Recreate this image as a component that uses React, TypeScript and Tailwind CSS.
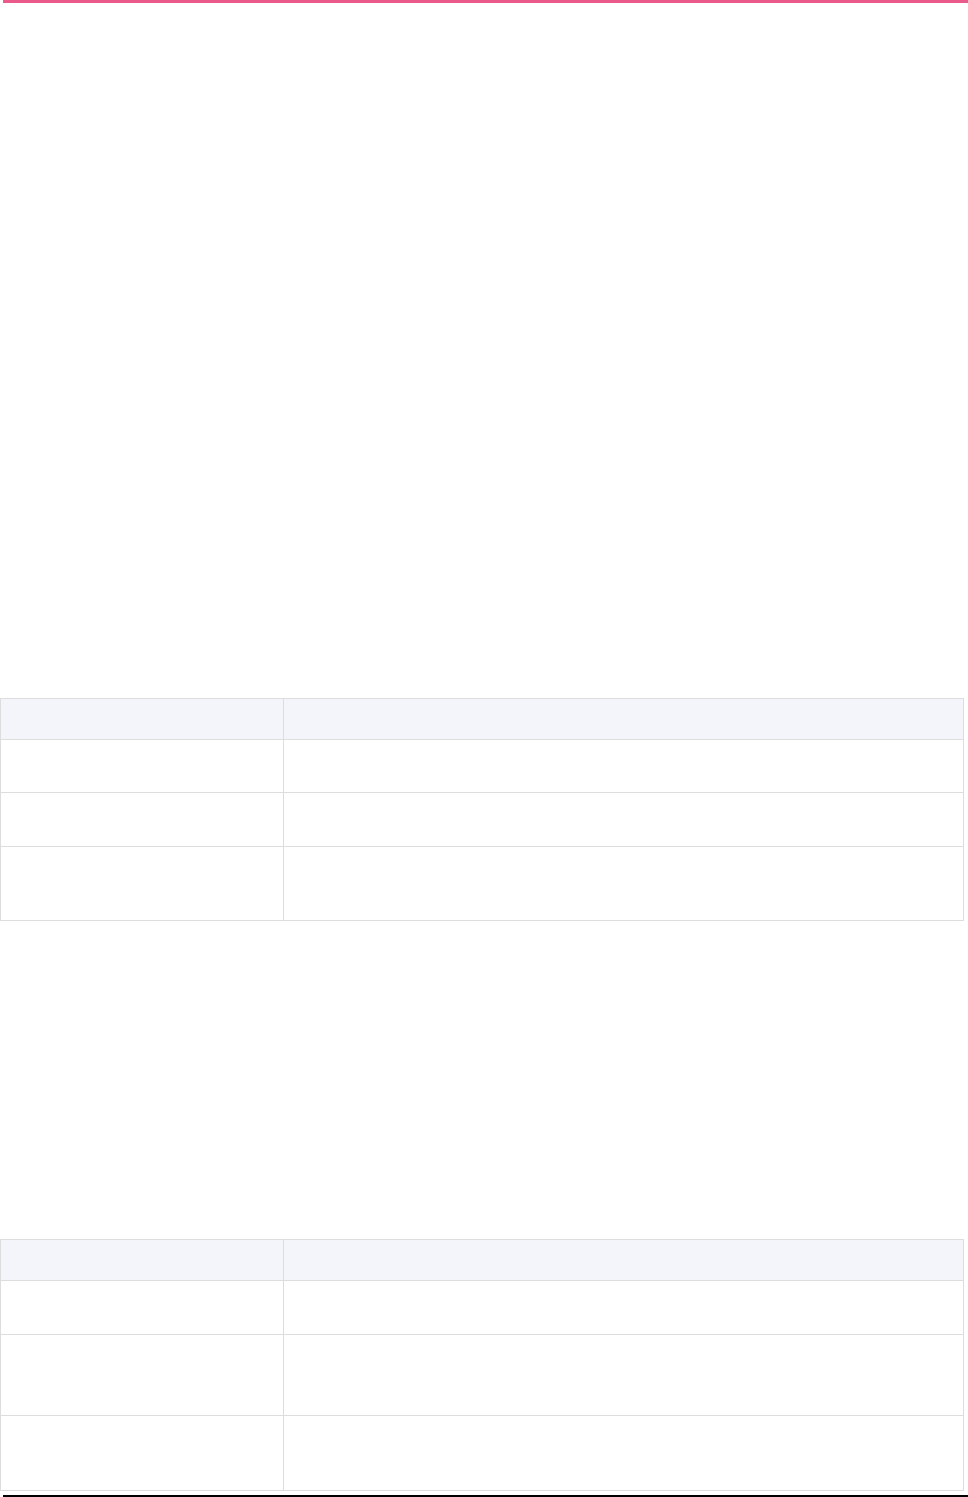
// Blank document page: accent bar on top, two empty bordered tables
const Table = ({ rows }: { rows: number[] }) => (
  <table className="w-[964px] border-collapse table-fixed">
    <colgroup>
      <col className="w-[283px]" />
      <col />
    </colgroup>
    <thead>
      <tr className="h-[41px] bg-[#f4f5fa]">
        <th className="border border-[#dddddd]"></th>
        <th className="border border-[#dddddd]"></th>
      </tr>
    </thead>
    <tbody>
      {rows.map((h, i) => (
        <tr key={i} style={{ height: h }}>
          <td className="border border-[#dddddd]"></td>
          <td className="border border-[#dddddd]"></td>
        </tr>
      ))}
    </tbody>
  </table>
);

export default function App() {
  return (
    <div className="w-[968px] h-[1497px] bg-white flex flex-col font-['Liberation_Sans',sans-serif]">
      {/* top accent bar */}
      <div className="ml-[3px] h-[3px] bg-[#ea5a8b]" />

      <div className="h-[695px]" />
      <Table rows={[53, 54, 74]} />

      <div className="h-[318px]" />
      <Table rows={[54, 81, 75]} />

      <div className="flex-1" />
      <div className="ml-[3px] h-[2px] bg-black" />
    </div>
  );
}
